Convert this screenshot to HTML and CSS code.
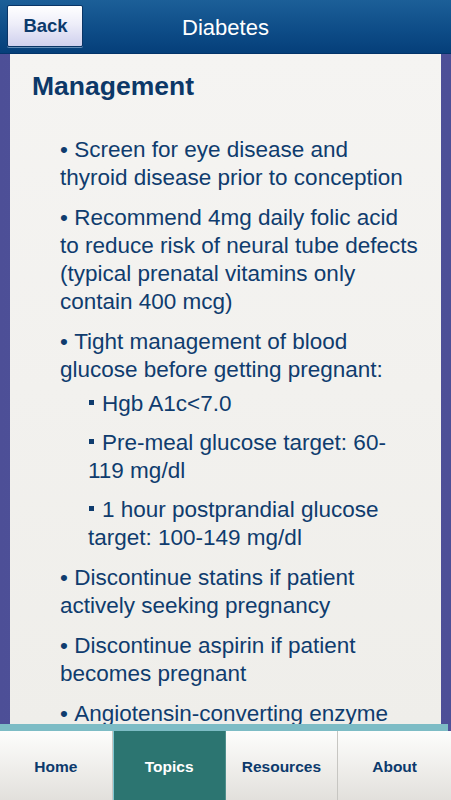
FILE: index.html
```html
<!DOCTYPE html>
<html lang="en">
<head>
<meta charset="utf-8">
<title>Diabetes</title>
<link rel="stylesheet" href="styles.css">
</head>
<body>
<div class="app">
  <header class="navbar">
    <div class="nav-left"><button class="back">Back</button></div>
    <h1 class="nav-title">Diabetes</h1>
    <div class="nav-right"></div>
  </header>
  <main class="stage">
    <section class="panel">
      <h2 class="heading">Management</h2>
      <ul class="list">
        <li>Screen for eye disease and thyroid disease prior to conception</li>
        <li>Recommend 4mg daily folic acid to reduce risk of neural tube defects (typical prenatal vitamins only contain 400 mcg)</li>
        <li>Tight management of blood glucose before getting pregnant:
          <ul class="sublist">
            <li>Hgb A1c&lt;7.0</li>
            <li>Pre-meal glucose target: 60-119 mg/dl</li>
            <li>1 hour postprandial glucose target: 100-149 mg/dl</li>
          </ul>
        </li>
        <li>Discontinue statins if patient actively seeking pregnancy</li>
        <li>Discontinue aspirin if patient becomes pregnant</li>
        <li>Angiotensin-converting enzyme</li>
      </ul>
    </section>
  </main>
  <footer class="tabbar">
    <div class="tab-accent"></div>
    <nav class="tabs">
      <a class="tab">Home</a>
      <a class="tab tab-active">Topics</a>
      <a class="tab">Resources</a>
      <a class="tab">About</a>
    </nav>
  </footer>
</div>
</body>
</html>
```
FILE: styles.css
```css
* { box-sizing: border-box; }
html, body { margin: 0; padding: 0; }
body {
  font-family: "Liberation Sans", Arial, Helvetica, sans-serif;
  background: #4f5199;
}
.app {
  width: 451px;
  height: 800px;
  display: flex;
  flex-direction: column;
  overflow: hidden;
}
.navbar {
  height: 54px;
  flex: 0 0 54px;
  display: grid;
  grid-template-columns: 1fr auto 1fr;
  align-items: center;
  background: linear-gradient(#1c5f98, #0e4d88 55%, #053f7a);
  border-bottom: 1px solid #03346a;
}
.nav-left { display: flex; align-items: flex-start; height: 100%; }
.back {
  margin: 5px 0 0 7px;
  width: 76px;
  height: 42px;
  border: 1px solid #0a3566;
  border-radius: 2px;
  background: linear-gradient(#ffffff, #eeeef9 45%, #cfd0ee);
  box-shadow: 0 1px 0 rgba(160, 190, 220, 0.6);
  font-family: "Liberation Sans", Arial, sans-serif;
  font-weight: bold;
  font-size: 18.5px;
  color: #0c3a6c;
  padding: 0 0 0 1px;
}
.nav-title {
  margin: 0;
  padding-top: 3px;
  font-weight: normal;
  font-size: 22px;
  color: #ffffff;
}
.stage {
  flex: 1 1 auto;
  min-height: 0;
  padding: 0 10px;
  background: linear-gradient(90deg, #4d4f97, #5355a0 50%, #4d4f97);
  display: flex;
}
.panel {
  flex: 1;
  overflow: hidden;
  background: linear-gradient(#f5f4f2, #efeeea);
  padding: 16px 0 0 22px;
  color: #0f3c6e;
}
.heading {
  margin: 0;
  font-size: 26.5px;
  line-height: 32px;
  font-weight: bold;
  color: #0c3868;
}
.list {
  list-style: none;
  margin: 34px 0 0 28px;
  padding: 0;
  width: 358px;
  font-size: 22.5px;
  line-height: 28px;
}
.list > li + li { margin-top: 12px; }
.list > li::before { content: "\2022\00a0"; }
.sublist {
  list-style: none;
  margin: 6px 0 5px 28px;
  padding: 0;
}
.sublist > li + li { margin-top: 11px; }
.sublist > li::before {
  content: "";
  display: inline-block;
  width: 5px;
  height: 5px;
  background: currentColor;
  margin: 0 8px 0 1px;
  vertical-align: 6px;
}
.tabbar {
  flex: 0 0 76px;
  display: flex;
  flex-direction: column;
  background: #4f5199;
}
.tab-accent {
  height: 7px;
  width: 448px;
  background: #7dbcc5;
}
.tabs {
  flex: 1;
  display: grid;
  grid-template-columns: repeat(4, 1fr);
}
.tab {
  display: flex;
  align-items: center;
  justify-content: center;
  padding-top: 2px;
  background: linear-gradient(#fdfdfc, #f0efec 50%, #e2e0dc);
  border-right: 1px solid #c7c6c2;
  font-weight: bold;
  font-size: 15.5px;
  color: #0c3a6c;
}
.tab:last-child { border-right: none; }
.tab-active {
  background: #2c7571;
  color: #ffffff;
  border-left: 1px solid #80c8d2;
  border-right: 1px solid #4f8f8c;
}
```
